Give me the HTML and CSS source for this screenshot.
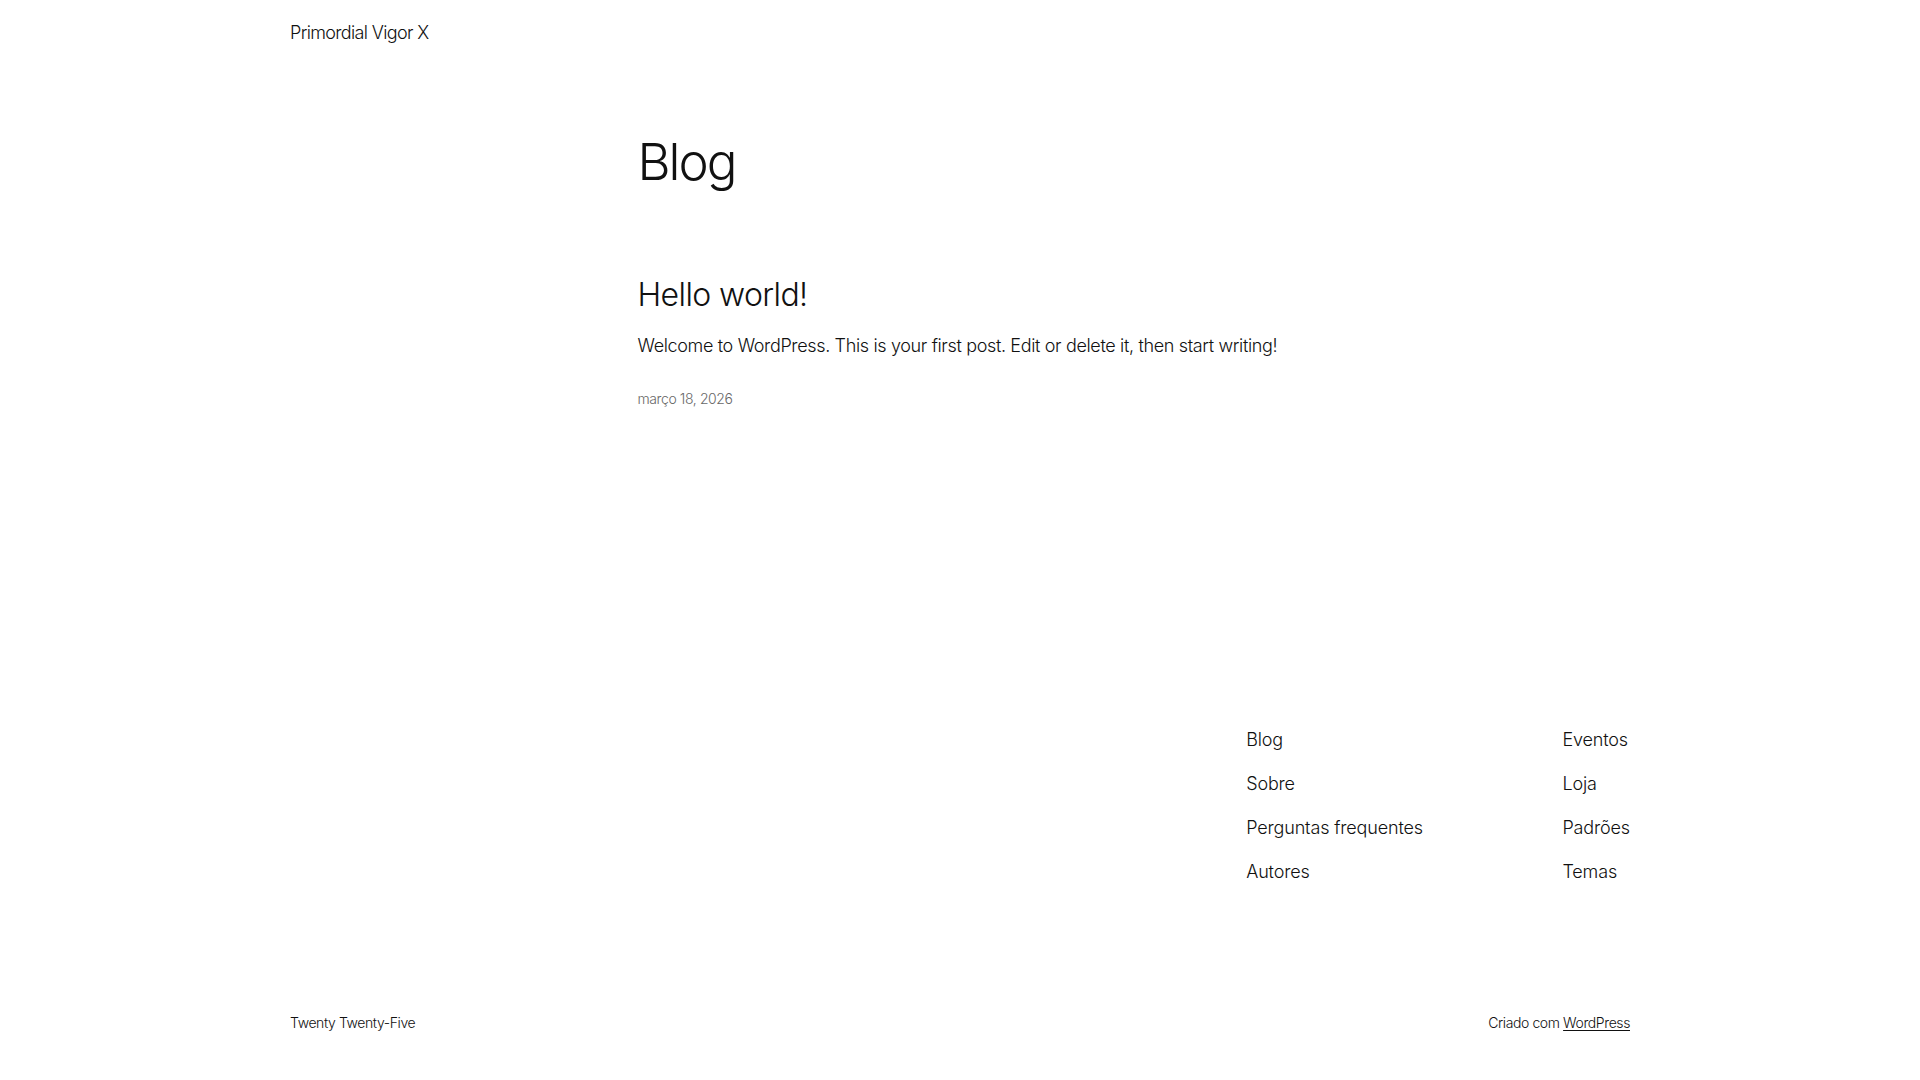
FILE: index.html
```html
<!DOCTYPE html>
<html lang="pt-BR">
<head>
<meta charset="utf-8">
<title>Blog – Primordial Vigor X</title>
<link rel="stylesheet" href="styles.css">
</head>
<body>
<header class="site-header">
  <div class="wide">
    <p class="site-title"><a href="#">Primordial Vigor X</a></p>
  </div>
</header>
<main class="site-main">
  <div class="content">
    <h1 class="page-title">Blog</h1>
    <article class="post">
      <h2 class="post-title"><a href="#">Hello world!</a></h2>
      <p class="post-excerpt">Welcome to WordPress. This is your first post. Edit or delete it, then start writing!</p>
      <p class="post-date"><time datetime="2026-03-18">março 18, 2026</time></p>
    </article>
  </div>
</main>
<footer class="site-footer">
  <div class="wide">
    <div class="footer-top">
      <nav class="footer-navs">
        <ul class="footer-nav">
          <li><a href="#">Blog</a></li>
          <li><a href="#">Sobre</a></li>
          <li><a href="#">Perguntas frequentes</a></li>
          <li><a href="#">Autores</a></li>
        </ul>
        <ul class="footer-nav">
          <li><a href="#">Eventos</a></li>
          <li><a href="#">Loja</a></li>
          <li><a href="#">Padrões</a></li>
          <li><a href="#">Temas</a></li>
        </ul>
      </nav>
    </div>
    <div class="footer-bottom">
      <p class="credit-theme">Twenty Twenty-Five</p>
      <p class="credit-wp">Criado com <a href="#">WordPress</a></p>
    </div>
  </div>
</footer>
</body>
</html>
```

FILE: styles.css
```css
* {
  box-sizing: border-box;
}

html, body {
  margin: 0;
  padding: 0;
  background: #ffffff;
}

body {
  font-family: "Inter", "Roboto", "Liberation Sans", sans-serif;
  font-weight: 300;
  font-size: 18px;
  line-height: 1.4;
  letter-spacing: -0.4px;
  color: #111111;
}

a {
  color: inherit;
  text-decoration: none;
}

p, h1, h2, ul {
  margin: 0;
  padding: 0;
}

.wide {
  width: 1340px;
  margin: 0 auto;
}

.content {
  width: 645px;
  margin: 0 auto;
}

/* header */
.site-header {
  padding-top: 20px;
}

.site-title {
  font-size: 18px;
  line-height: 25.2px;
  letter-spacing: -0.65px;
}

/* main */
.site-main {
  padding-top: 88px;
}

.page-title {
  font-size: 51px;
  font-weight: 300;
  line-height: 57.4px;
  letter-spacing: -2px;
}

.post {
  margin-top: 85.7px;
}

.post-title {
  font-size: 32px;
  font-weight: 300;
  line-height: 38.4px;
  letter-spacing: -0.6px;
}

.post-excerpt {
  margin-top: 18.3px;
  font-size: 18px;
  line-height: 25.2px;
  letter-spacing: -0.35px;
  white-space: nowrap;
}

.post-date {
  margin-top: 29.3px;
  font-size: 14px;
  line-height: 21px;
  letter-spacing: -0.4px;
  color: #686868;
}

/* footer */
.site-footer {
  padding-top: 318.8px;
}

.footer-top {
  display: flex;
  justify-content: flex-end;
}

.footer-navs {
  display: flex;
  gap: 139.5px;
}

.footer-nav {
  list-style: none;
  display: flex;
  flex-direction: column;
  gap: 18.8px;
  font-size: 18px;
  line-height: 25.2px;
  letter-spacing: -0.15px;
}

.footer-bottom {
  margin-top: 128.5px;
  display: flex;
  justify-content: space-between;
  font-size: 14px;
  line-height: 20.3px;
  letter-spacing: -0.4px;
}

.credit-wp a {
  text-decoration: underline;
  text-underline-offset: 2px;
  text-decoration-thickness: 1px;
}
```
